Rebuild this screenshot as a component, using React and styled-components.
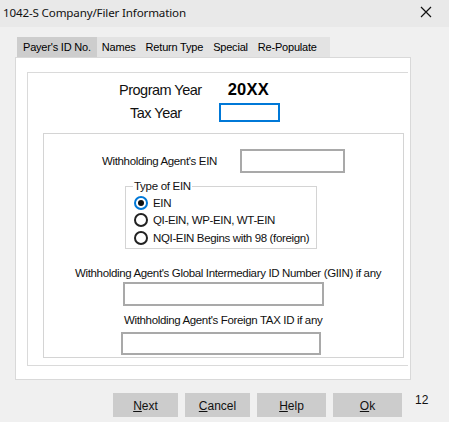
import React from "react";
import styled, { createGlobalStyle } from "styled-components";

const Global = createGlobalStyle`
  html, body { margin: 0; padding: 0; }
  body {
    width: 449px; height: 422px; overflow: hidden;
    background: #f0f0f0;
    font-family: "Liberation Sans", Arial, sans-serif;
    color: #000;
  }
`;

const Window = styled.div`
  width: 449px;
  height: 422px;
  display: flex;
  flex-direction: column;
  background: #f0f0f0;
`;

const TitleBar = styled.div`
  height: 27px;
  flex: none;
  background: #e9e9e9;
  display: flex;
  align-items: center;
  justify-content: space-between;
  padding: 0 17px 0 3px;
  box-sizing: border-box;
`;

const Title = styled.span`
  font-family: "Noto Sans", "Open Sans", sans-serif;
  font-size: 11.6px;
  color: #111;
  letter-spacing: -0.15px;
  padding-bottom: 3px;
`;

const Close = styled.svg`
  width: 12px;
  height: 12px;
  margin-bottom: 3px;
`;

const Body = styled.div`
  padding: 10px 0 0 15px;
  display: flex;
  flex-direction: column;
`;

const TabStrip = styled.div`
  display: flex;
  margin-left: 2px;
  height: 20px;
  width: 313px;
  background: #e3e3e3;
`;

const Tab = styled.div`
  height: 20px;
  display: flex;
  align-items: center;
  padding: 0 ${(p) => (p.$active ? "6px" : "5px")};
  font-size: 11px;
  letter-spacing: -0.2px;
  background: ${(p) => (p.$active ? "#cdcdcd" : "transparent")};
  box-sizing: border-box;
`;

const Panel = styled.div`
  width: 396px;
  height: 323px;
  box-sizing: border-box;
  background: #fff;
  border: 1px solid #d9d9d9;
  padding: 14px 2px 0 11px;
`;

const OuterFrame = styled.div`
  height: 294px;
  box-sizing: border-box;
  border: 1px solid #dadada;
  border-right: none;
  padding: 8px 0 0 15px;
  display: flex;
  flex-direction: column;
`;

const YearRow = styled.div`
  display: flex;
  align-items: center;
  height: ${(p) => p.$h}px;
`;

const YearLabel = styled.div`
  margin-left: ${(p) => p.$ml}px;
  font-size: 14.5px;
  letter-spacing: -0.5px;
  color: #111;
  white-space: nowrap;
`;

const YearValue = styled.div`
  margin-left: 26px;
  font-size: 16.5px;
  font-weight: bold;
  letter-spacing: 0.2px;
`;

const TaxInput = styled.div`
  margin-left: 37px;
  width: 61px;
  height: 19px;
  box-sizing: border-box;
  border: 2px solid #0078d7;
  background: #fff;
`;

const InnerFrame = styled.div`
  margin-top: 6px;
  width: 361px;
  height: 225px;
  box-sizing: border-box;
  border: 1px solid #d4d4d4;
  display: flex;
  flex-direction: column;
  padding-top: 15px;
`;

const EinRow = styled.div`
  display: flex;
  align-items: center;
  padding-left: 58px;
`;

const Label = styled.div`
  font-size: 11.5px;
  letter-spacing: -0.35px;
  color: #111;
  white-space: nowrap;
`;

const TextBox = styled.div`
  width: ${(p) => p.$w}px;
  height: ${(p) => p.$h || 24}px;
  box-sizing: border-box;
  border: 2px solid #a9a9a9;
  background: #fff;
  margin-left: ${(p) => p.$ml || 0}px;
`;

const Fieldset = styled.fieldset`
  margin: 7px 0 0 81px;
  width: 192px;
  height: 69px;
  box-sizing: border-box;
  border: 1px solid #d4d4d4;
  padding: 0 0 0 8px;
  display: flex;
  flex-direction: column;
`;

const Legend = styled.legend`
  font-size: 11.5px;
  letter-spacing: -0.3px;
  padding: 0 1px;
  margin-left: -1px;
  color: #111;
`;

const RadioRow = styled.div`
  display: flex;
  align-items: center;
  height: 17.5px;
  margin-top: ${(p) => (p.$first ? "2px" : "0")};
`;

const Radio = styled.span`
  width: 14px;
  height: 14px;
  box-sizing: border-box;
  border-radius: 50%;
  border: 2px solid ${(p) => (p.$checked ? "#0078d7" : "#222")};
  display: flex;
  align-items: center;
  justify-content: center;
  flex: none;
  &::after {
    content: "";
    display: ${(p) => (p.$checked ? "block" : "none")};
    width: 6px;
    height: 6px;
    border-radius: 50%;
    background: #111;
  }
`;

const RadioText = styled.span`
  margin-left: 5px;
  font-size: 11.5px;
  letter-spacing: -0.35px;
  color: #111;
  white-space: nowrap;
`;

const CenterLabel = styled(Label)`
  margin: ${(p) => p.$mt}px 0 0 ${(p) => p.$ml}px;
`;

const BoxWrap = styled.div`
  margin: ${(p) => p.$mt}px 0 0 ${(p) => p.$ml}px;
`;

const ButtonBar = styled.div`
  display: flex;
  align-items: flex-start;
  margin-top: 13px;
  padding-left: 98px;
`;

const Button = styled.button`
  width: ${(p) => p.$w}px;
  height: 24px;
  margin-right: ${(p) => p.$mr}px;
  border: none;
  background: #cccccc;
  font-family: "Liberation Sans", Arial, sans-serif;
  font-size: 12px;
  color: #111;
  padding: 2px 0 0 0;
  u { text-decoration: underline; text-underline-offset: 1px; }
`;

const PageNum = styled.span`
  font-size: 12px;
  color: #111;
  margin-left: 13px;
`;

export default function App() {
  return (
    <>
      <Global />
      <Window>
        <TitleBar>
          <Title>1042-S Company/Filer Information</Title>
          <Close viewBox="0 0 12 12">
            <path d="M1 1 L11 11 M11 1 L1 11" stroke="#111" strokeWidth="1.2" />
          </Close>
        </TitleBar>
        <Body>
          <TabStrip>
            <Tab $active>Payer's ID No.</Tab>
            <Tab>Names</Tab>
            <Tab>Return Type</Tab>
            <Tab>Special</Tab>
            <Tab>Re-Populate</Tab>
          </TabStrip>
          <Panel>
            <OuterFrame>
              <YearRow $h={17}>
                <YearLabel $ml={76}>Program Year</YearLabel>
                <YearValue>20XX</YearValue>
              </YearRow>
              <YearRow $h={29}>
                <YearLabel $ml={87}>Tax Year</YearLabel>
                <TaxInput />
              </YearRow>
              <InnerFrame>
                <EinRow>
                  <Label>Withholding Agent's EIN</Label>
                  <TextBox $w={105} $ml={23} />
                </EinRow>
                <Fieldset>
                  <Legend>Type of EIN</Legend>
                  <RadioRow $first>
                    <Radio $checked />
                    <RadioText>EIN</RadioText>
                  </RadioRow>
                  <RadioRow>
                    <Radio />
                    <RadioText>QI-EIN, WP-EIN, WT-EIN</RadioText>
                  </RadioRow>
                  <RadioRow>
                    <Radio />
                    <RadioText>NQI-EIN Begins with 98 (foreign)</RadioText>
                  </RadioRow>
                </Fieldset>
                <CenterLabel $mt={18} $ml={31}>
                  Withholding Agent's Global Intermediary ID Number (GIIN) if any
                </CenterLabel>
                <BoxWrap $mt={3} $ml={79}>
                  <TextBox $w={201} $h={24} />
                </BoxWrap>
                <CenterLabel $mt={8} $ml={80}>
                  Withholding Agent's Foreign TAX ID if any
                </CenterLabel>
                <BoxWrap $mt={6} $ml={77}>
                  <TextBox $w={200} $h={23} />
                </BoxWrap>
              </InnerFrame>
            </OuterFrame>
          </Panel>
          <ButtonBar>
            <Button $w={65} $mr={7}><u>N</u>ext</Button>
            <Button $w={65} $mr={7}><u>C</u>ancel</Button>
            <Button $w={69} $mr={7}><u>H</u>elp</Button>
            <Button $w={69} $mr={0}><u>O</u>k</Button>
            <PageNum>12</PageNum>
          </ButtonBar>
        </Body>
      </Window>
    </>
  );
}
